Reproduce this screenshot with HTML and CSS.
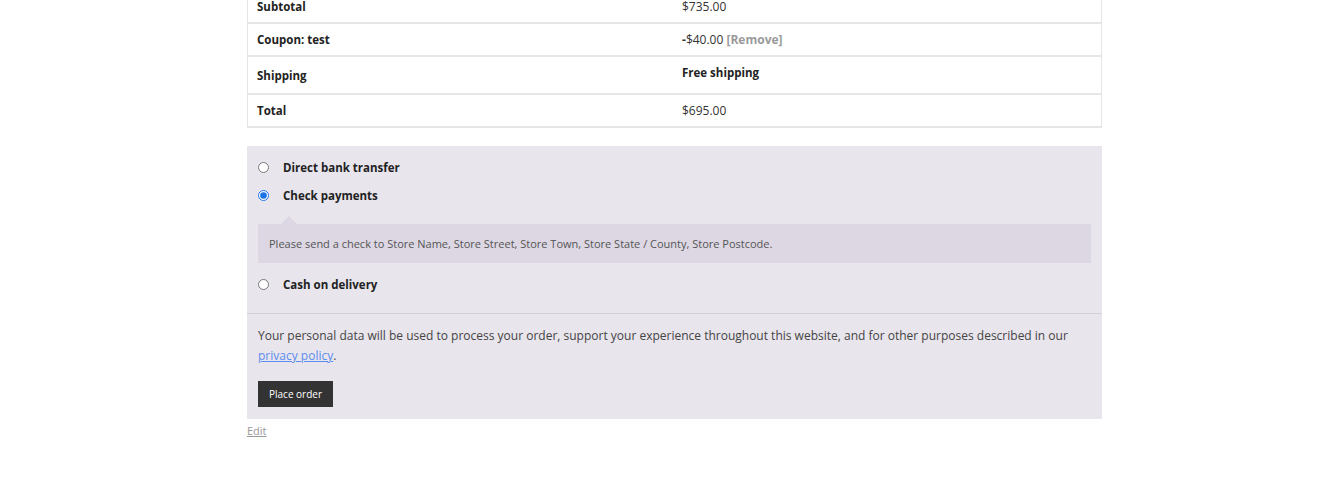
FILE: index.html
```html
<!DOCTYPE html>
<html lang="en">
<head>
<meta charset="utf-8">
<title>Checkout</title>
<link rel="stylesheet" href="styles.css">
</head>
<body>
<div class="checkout">
  <table class="totals">
    <tbody>
      <tr>
        <th>Subtotal</th>
        <td>$735.00</td>
      </tr>
      <tr>
        <th>Coupon: test</th>
        <td><span class="minus">-</span>$40.00 <a class="remove" href="#">[Remove]</a></td>
      </tr>
      <tr class="shipping">
        <th>Shipping</th>
        <td><ul class="methods"><li>Free shipping</li></ul></td>
      </tr>
      <tr>
        <th>Total</th>
        <td>$695.00</td>
      </tr>
    </tbody>
  </table>

  <div class="payment">
    <ul class="pay-methods">
      <li class="method">
        <label class="method-label"><input type="radio" name="pm"> <span>Direct bank transfer</span></label>
      </li>
      <li class="method">
        <label class="method-label"><input type="radio" name="pm" checked> <span>Check payments</span></label>
        <div class="pay-box">
          <p>Please send a check to Store Name, Store Street, Store Town, Store State / County, Store Postcode.</p>
        </div>
      </li>
      <li class="method">
        <label class="method-label"><input type="radio" name="pm"> <span>Cash on delivery</span></label>
      </li>
    </ul>
    <div class="place-order">
      <p class="privacy">Your personal data will be used to process your order, support your experience throughout this website, and for other purposes described in our <a href="#">privacy policy</a>.</p>
      <button class="btn" type="button">Place order</button>
    </div>
  </div>
  <a class="edit" href="#">Edit</a>
</div>
</body>
</html>
```
FILE: styles.css
```css
html, body {
  margin: 0;
  padding: 0;
  background: #fff;
}
body {
  font-family: "Open Sans", "Liberation Sans", sans-serif;
  color: #333;
  font-size: 12px;
}
.checkout {
  width: 855px;
  margin-left: 247px;
}
.totals {
  width: 100%;
  border-collapse: collapse;
  border: 1px solid #e5e5e5;
  margin-top: -10px;
  table-layout: fixed;
}
.totals th,
.totals td {
  text-align: left;
  padding: 8px 9px;
  line-height: 15px;
  font-size: 12px;
  border-bottom: 2px solid #e6e6e6;
  vertical-align: middle;
}
.totals th {
  width: 407px;
  font-weight: 700;
  font-size: 11.5px;
  color: #222;
}
.totals td {
  color: #333;
}
.minus {
  font-weight: 700;
}
.shipping td {
  vertical-align: top;
}
.methods {
  list-style: none;
  margin: 0 0 5px;
  padding: 0;
  font-weight: 700;
  font-size: 11.5px;
  color: #222;
}
.remove {
  color: #9a9a9a;
  font-weight: 700;
  text-decoration: none;
}
.payment {
  margin-top: 18px;
  background: #e8e5ec;
}
.pay-methods {
  list-style: none;
  margin: 0;
  padding: 7px 11px 15px;
  border-bottom: 1px solid #d3ced8;
}
.method {
  padding: 0;
}
.method-label {
  display: flex;
  align-items: center;
  gap: 14px;
  height: 28px;
  font-weight: 700;
  font-size: 11.5px;
  color: #222;
}
.method-label input {
  margin: 0;
  width: 11px;
  height: 11px;
  accent-color: #1a73e8;
}
.pay-box {
  position: relative;
  background: #dcd7e3;
  margin: 15px 0 7px;
  padding: 12px 11px;
}
.pay-box::before {
  content: "";
  position: absolute;
  top: -16px;
  left: 23px;
  border: 8px solid transparent;
  border-bottom-color: #dcd7e3;
}
.pay-box p {
  margin: 0;
  font-size: 11px;
  line-height: 15px;
  color: #555;
}
.place-order {
  padding: 12px 11px 12px;
}
.privacy {
  margin: 0 0 15px;
  font-size: 12px;
  line-height: 20px;
  color: #444;
}
.privacy a {
  color: #5b8def;
}
.btn {
  display: block;
  background: #333;
  color: #fff;
  border: 0;
  border-radius: 0;
  height: 26px;
  padding: 0 11px;
  font-family: inherit;
  font-size: 10px;
  font-weight: 400;
}
.edit {
  display: inline-block;
  margin-top: 4px;
  font-size: 11px;
  color: #999;
}
```
